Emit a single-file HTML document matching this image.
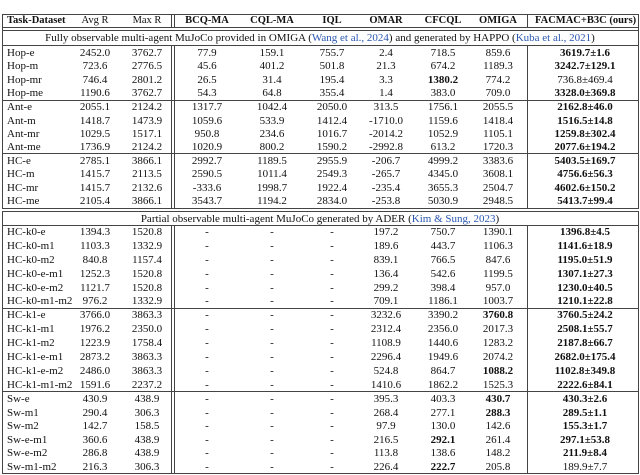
<!DOCTYPE html>
<html><head><meta charset="utf-8"><style>
*{margin:0;padding:0}
body{width:640px;height:475px;background:#fff;position:relative;overflow:hidden;font-family:"Liberation Serif",serif;font-size:11px;color:#111}
.r{position:absolute;left:0;width:640px;height:14px;line-height:14px}
.r i{position:absolute;font-style:normal;width:100px;text-align:center;white-space:nowrap;top:0}
.r i.c0{left:7px;text-align:left}
.c1{left:45px}.c2{left:97px}.c3{left:157px}.c4{left:222px}.c5{left:282px}.c6{left:336px}.c7{left:393px}.c8{left:448px}.c9{left:535px}
.h{position:absolute;background:#444;height:1px}
.v{position:absolute;background:#444;width:1px}
.s{position:absolute;left:0;width:640px;text-align:center;line-height:14px;height:14px}
a{color:#2a57b0;text-decoration:none}
.hd i{font-weight:bold;font-size:10.5px}
</style></head><body>
<div class="h" style="left:2px;width:637px;top:14px"></div>
<div class="h" style="left:2px;width:637px;top:27px"></div>
<div class="h" style="left:2px;width:637px;top:30px"></div>
<div class="h" style="left:2px;width:637px;top:45px"></div>
<div class="h" style="left:2px;width:637px;top:100px"></div>
<div class="h" style="left:2px;width:637px;top:153px"></div>
<div class="h" style="left:2px;width:637px;top:208px"></div>
<div class="h" style="left:2px;width:637px;top:211px"></div>
<div class="h" style="left:2px;width:637px;top:225px"></div>
<div class="h" style="left:2px;width:637px;top:308px"></div>
<div class="h" style="left:2px;width:637px;top:391px"></div>
<div class="h" style="left:2px;width:637px;top:473px"></div>
<div class="v" style="left:2px;top:14px;height:195px"></div>
<div class="v" style="left:638px;top:14px;height:195px"></div>
<div class="v" style="left:2px;top:211px;height:263px"></div>
<div class="v" style="left:638px;top:211px;height:263px"></div>
<div class="v" style="left:171px;top:14px;height:14px"></div>
<div class="v" style="left:174px;top:14px;height:14px"></div>
<div class="v" style="left:527px;top:14px;height:14px"></div>
<div class="v" style="left:171px;top:45px;height:163px"></div>
<div class="v" style="left:174px;top:45px;height:163px"></div>
<div class="v" style="left:527px;top:45px;height:163px"></div>
<div class="v" style="left:171px;top:225px;height:248px"></div>
<div class="v" style="left:174px;top:225px;height:248px"></div>
<div class="v" style="left:527px;top:225px;height:248px"></div>

<div class="r hd" style="top:14px"><i class="c0">Task-Dataset</i><i class="c1" style="font-weight:normal">Avg R</i><i class="c2" style="font-weight:normal">Max R</i><i class="c3">BCQ-MA</i><i class="c4">CQL-MA</i><i class="c5">IQL</i><i class="c6">OMAR</i><i class="c7">CFCQL</i><i class="c8">OMIGA</i><i class="c9">FACMAC+B3C (ours)</i></div>
<div class="s" style="top:31px">Fully observable multi-agent MuJoCo provided in OMIGA (<a>Wang et al., 2024</a>) and generated by HAPPO (<a>Kuba et al., 2021</a>)</div>

<div class="r" style="top:45.5px"><i class="c0">Hop-e</i><i class="c1">2452.0</i><i class="c2">3762.7</i><i class="c3">77.9</i><i class="c4">159.1</i><i class="c5">755.7</i><i class="c6">2.4</i><i class="c7">718.5</i><i class="c8">859.6</i><i class="c9"><b>3619.7±1.6</b></i></div>
<div class="r" style="top:59px"><i class="c0">Hop-m</i><i class="c1">723.6</i><i class="c2">2776.5</i><i class="c3">45.6</i><i class="c4">401.2</i><i class="c5">501.8</i><i class="c6">21.3</i><i class="c7">674.2</i><i class="c8">1189.3</i><i class="c9"><b>3242.7±129.1</b></i></div>
<div class="r" style="top:72.7px"><i class="c0">Hop-mr</i><i class="c1">746.4</i><i class="c2">2801.2</i><i class="c3">26.5</i><i class="c4">31.4</i><i class="c5">195.4</i><i class="c6">3.3</i><i class="c7"><b>1380.2</b></i><i class="c8">774.2</i><i class="c9">736.8±469.4</i></div>
<div class="r" style="top:86.3px"><i class="c0">Hop-me</i><i class="c1">1190.6</i><i class="c2">3762.7</i><i class="c3">54.3</i><i class="c4">64.8</i><i class="c5">355.4</i><i class="c6">1.4</i><i class="c7">383.0</i><i class="c8">709.0</i><i class="c9"><b>3328.0±369.8</b></i></div>

<div class="r" style="top:100.3px"><i class="c0">Ant-e</i><i class="c1">2055.1</i><i class="c2">2124.2</i><i class="c3">1317.7</i><i class="c4">1042.4</i><i class="c5">2050.0</i><i class="c6">313.5</i><i class="c7">1756.1</i><i class="c8">2055.5</i><i class="c9"><b>2162.8±46.0</b></i></div>
<div class="r" style="top:113.6px"><i class="c0">Ant-m</i><i class="c1">1418.7</i><i class="c2">1473.9</i><i class="c3">1059.6</i><i class="c4">533.9</i><i class="c5">1412.4</i><i class="c6">-1710.0</i><i class="c7">1159.6</i><i class="c8">1418.4</i><i class="c9"><b>1516.5±14.8</b></i></div>
<div class="r" style="top:126.9px"><i class="c0">Ant-mr</i><i class="c1">1029.5</i><i class="c2">1517.1</i><i class="c3">950.8</i><i class="c4">234.6</i><i class="c5">1016.7</i><i class="c6">-2014.2</i><i class="c7">1052.9</i><i class="c8">1105.1</i><i class="c9"><b>1259.8±302.4</b></i></div>
<div class="r" style="top:140.2px"><i class="c0">Ant-me</i><i class="c1">1736.9</i><i class="c2">2124.2</i><i class="c3">1020.9</i><i class="c4">800.2</i><i class="c5">1590.2</i><i class="c6">-2992.8</i><i class="c7">613.2</i><i class="c8">1720.3</i><i class="c9"><b>2077.6±194.2</b></i></div>

<div class="r" style="top:153.5px"><i class="c0">HC-e</i><i class="c1">2785.1</i><i class="c2">3866.1</i><i class="c3">2992.7</i><i class="c4">1189.5</i><i class="c5">2955.9</i><i class="c6">-206.7</i><i class="c7">4999.2</i><i class="c8">3383.6</i><i class="c9"><b>5403.5±169.7</b></i></div>
<div class="r" style="top:167.2px"><i class="c0">HC-m</i><i class="c1">1415.7</i><i class="c2">2113.5</i><i class="c3">2590.5</i><i class="c4">1011.4</i><i class="c5">2549.3</i><i class="c6">-265.7</i><i class="c7">4345.0</i><i class="c8">3608.1</i><i class="c9"><b>4756.6±56.3</b></i></div>
<div class="r" style="top:180.9px"><i class="c0">HC-mr</i><i class="c1">1415.7</i><i class="c2">2132.6</i><i class="c3">-333.6</i><i class="c4">1998.7</i><i class="c5">1922.4</i><i class="c6">-235.4</i><i class="c7">3655.3</i><i class="c8">2504.7</i><i class="c9"><b>4602.6±150.2</b></i></div>
<div class="r" style="top:194.4px"><i class="c0">HC-me</i><i class="c1">2105.4</i><i class="c2">3866.1</i><i class="c3">3543.7</i><i class="c4">1194.2</i><i class="c5">2834.0</i><i class="c6">-253.8</i><i class="c7">5030.9</i><i class="c8">2948.5</i><i class="c9"><b>5413.7±99.4</b></i></div>

<div class="s" style="top:211.5px">Partial observable multi-agent MuJoCo generated by ADER (<a>Kim &amp; Sung, 2023</a>)</div>

<div class="r" style="top:225px"><i class="c0">HC-k0-e</i><i class="c1">1394.3</i><i class="c2">1520.8</i><i class="c3">-</i><i class="c4">-</i><i class="c5">-</i><i class="c6">197.2</i><i class="c7">750.7</i><i class="c8">1390.1</i><i class="c9"><b>1396.8±4.5</b></i></div>
<div class="r" style="top:238.9px"><i class="c0">HC-k0-m1</i><i class="c1">1103.3</i><i class="c2">1332.9</i><i class="c3">-</i><i class="c4">-</i><i class="c5">-</i><i class="c6">189.6</i><i class="c7">443.7</i><i class="c8">1106.3</i><i class="c9"><b>1141.6±18.9</b></i></div>
<div class="r" style="top:252.8px"><i class="c0">HC-k0-m2</i><i class="c1">840.8</i><i class="c2">1157.4</i><i class="c3">-</i><i class="c4">-</i><i class="c5">-</i><i class="c6">839.1</i><i class="c7">766.5</i><i class="c8">847.6</i><i class="c9"><b>1195.0±51.9</b></i></div>
<div class="r" style="top:266.7px"><i class="c0">HC-k0-e-m1</i><i class="c1">1252.3</i><i class="c2">1520.8</i><i class="c3">-</i><i class="c4">-</i><i class="c5">-</i><i class="c6">136.4</i><i class="c7">542.6</i><i class="c8">1199.5</i><i class="c9"><b>1307.1±27.3</b></i></div>
<div class="r" style="top:280.6px"><i class="c0">HC-k0-e-m2</i><i class="c1">1121.7</i><i class="c2">1520.8</i><i class="c3">-</i><i class="c4">-</i><i class="c5">-</i><i class="c6">299.2</i><i class="c7">398.4</i><i class="c8">957.0</i><i class="c9"><b>1230.0±40.5</b></i></div>
<div class="r" style="top:294.4px"><i class="c0">HC-k0-m1-m2</i><i class="c1">976.2</i><i class="c2">1332.9</i><i class="c3">-</i><i class="c4">-</i><i class="c5">-</i><i class="c6">709.1</i><i class="c7">1186.1</i><i class="c8">1003.7</i><i class="c9"><b>1210.1±22.8</b></i></div>

<div class="r" style="top:308.3px"><i class="c0">HC-k1-e</i><i class="c1">3766.0</i><i class="c2">3863.3</i><i class="c3">-</i><i class="c4">-</i><i class="c5">-</i><i class="c6">3232.6</i><i class="c7">3390.2</i><i class="c8"><b>3760.8</b></i><i class="c9"><b>3760.5±24.2</b></i></div>
<div class="r" style="top:322.2px"><i class="c0">HC-k1-m1</i><i class="c1">1976.2</i><i class="c2">2350.0</i><i class="c3">-</i><i class="c4">-</i><i class="c5">-</i><i class="c6">2312.4</i><i class="c7">2356.0</i><i class="c8">2017.3</i><i class="c9"><b>2508.1±55.7</b></i></div>
<div class="r" style="top:336.1px"><i class="c0">HC-k1-m2</i><i class="c1">1223.9</i><i class="c2">1758.4</i><i class="c3">-</i><i class="c4">-</i><i class="c5">-</i><i class="c6">1108.9</i><i class="c7">1440.6</i><i class="c8">1283.2</i><i class="c9"><b>2187.8±66.7</b></i></div>
<div class="r" style="top:350px"><i class="c0">HC-k1-e-m1</i><i class="c1">2873.2</i><i class="c2">3863.3</i><i class="c3">-</i><i class="c4">-</i><i class="c5">-</i><i class="c6">2296.4</i><i class="c7">1949.6</i><i class="c8">2074.2</i><i class="c9"><b>2682.0±175.4</b></i></div>
<div class="r" style="top:363.9px"><i class="c0">HC-k1-e-m2</i><i class="c1">2486.0</i><i class="c2">3863.3</i><i class="c3">-</i><i class="c4">-</i><i class="c5">-</i><i class="c6">524.8</i><i class="c7">864.7</i><i class="c8"><b>1088.2</b></i><i class="c9"><b>1102.8±349.8</b></i></div>
<div class="r" style="top:377.6px"><i class="c0">HC-k1-m1-m2</i><i class="c1">1591.6</i><i class="c2">2237.2</i><i class="c3">-</i><i class="c4">-</i><i class="c5">-</i><i class="c6">1410.6</i><i class="c7">1862.2</i><i class="c8">1525.3</i><i class="c9"><b>2222.6±84.1</b></i></div>

<div class="r" style="top:392px"><i class="c0">Sw-e</i><i class="c1">430.9</i><i class="c2">438.9</i><i class="c3">-</i><i class="c4">-</i><i class="c5">-</i><i class="c6">395.3</i><i class="c7">403.3</i><i class="c8"><b>430.7</b></i><i class="c9"><b>430.3±2.6</b></i></div>
<div class="r" style="top:405.5px"><i class="c0">Sw-m1</i><i class="c1">290.4</i><i class="c2">306.3</i><i class="c3">-</i><i class="c4">-</i><i class="c5">-</i><i class="c6">268.4</i><i class="c7">277.1</i><i class="c8"><b>288.3</b></i><i class="c9"><b>289.5±1.1</b></i></div>
<div class="r" style="top:419px"><i class="c0">Sw-m2</i><i class="c1">142.7</i><i class="c2">158.5</i><i class="c3">-</i><i class="c4">-</i><i class="c5">-</i><i class="c6">97.9</i><i class="c7">130.0</i><i class="c8">142.6</i><i class="c9"><b>155.3±1.7</b></i></div>
<div class="r" style="top:432.5px"><i class="c0">Sw-e-m1</i><i class="c1">360.6</i><i class="c2">438.9</i><i class="c3">-</i><i class="c4">-</i><i class="c5">-</i><i class="c6">216.5</i><i class="c7"><b>292.1</b></i><i class="c8">261.4</i><i class="c9"><b>297.1±53.8</b></i></div>
<div class="r" style="top:446px"><i class="c0">Sw-e-m2</i><i class="c1">286.8</i><i class="c2">438.9</i><i class="c3">-</i><i class="c4">-</i><i class="c5">-</i><i class="c6">113.8</i><i class="c7">138.6</i><i class="c8">148.2</i><i class="c9"><b>211.9±8.4</b></i></div>
<div class="r" style="top:459.5px"><i class="c0">Sw-m1-m2</i><i class="c1">216.3</i><i class="c2">306.3</i><i class="c3">-</i><i class="c4">-</i><i class="c5">-</i><i class="c6">226.4</i><i class="c7"><b>222.7</b></i><i class="c8">205.8</i><i class="c9">189.9±7.7</i></div>
</body></html>
